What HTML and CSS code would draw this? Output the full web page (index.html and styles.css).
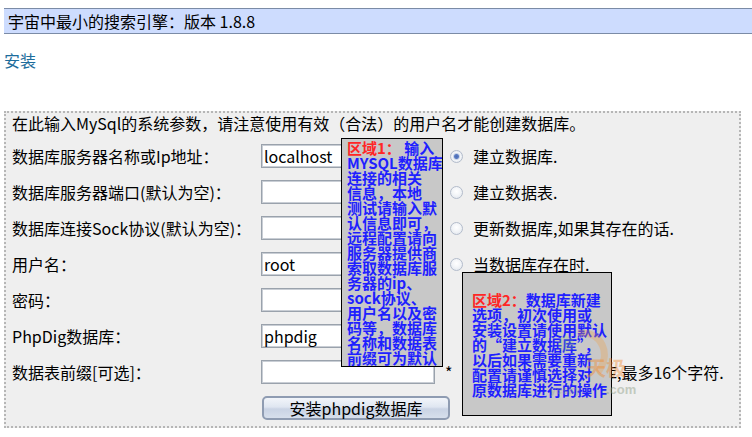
FILE: index.html
```html
<!DOCTYPE html>
<html lang="zh">
<head>
<meta charset="utf-8">
<title>PhpDig 安装</title>
<link rel="stylesheet" href="styles.css">
</head>
<body>
<div class="header">宇宙中最小的搜索引擎：版本 1.8.8</div>
<a class="install" href="#">安装</a>
<div class="box">
  <div class="intro">在此输入MySql的系统参数，请注意使用有效（合法）的用户名才能创建数据库。</div>
  <div class="grid">
    <div class="label">数据库服务器名称或Ip地址：</div>
    <div class="field"><input class="text" type="text" value="localhost"></div>
    <div class="opt"><input class="radio" type="radio" name="mode" checked><span>建立数据库.</span></div>

    <div class="label">数据库服务器端口(默认为空)：</div>
    <div class="field"><input class="text" type="text" value=""></div>
    <div class="opt"><input class="radio" type="radio" name="mode"><span>建立数据表.</span></div>

    <div class="label">数据库连接Sock协议(默认为空)：</div>
    <div class="field"><input class="text" type="text" value=""></div>
    <div class="opt"><input class="radio" type="radio" name="mode"><span>更新数据库,如果其存在的话.</span></div>

    <div class="label">用户名：</div>
    <div class="field"><input class="text" type="text" value="root"></div>
    <div class="opt"><input class="radio" type="radio" name="mode"><span>当数据库存在时.</span></div>

    <div class="label">密码：</div>
    <div class="field"><input class="text" type="password" value=""></div>
    <div class="opt"></div>

    <div class="label">PhpDig数据库：</div>
    <div class="field"><input class="text" type="text" value="phpdig"></div>
    <div class="opt"></div>

    <div class="label">数据表前缀[可选]：</div>
    <div class="field"><input class="text" type="text" value=""><span class="star">*</span></div>
    <div class="opt"><span class="note">当共享同一个数据库,最多16个字符.</span></div>

    <div class="label"></div>
    <div class="field btncell"><button class="btn" type="button">安装phpdig数据库</button></div>
    <div class="opt"></div>
  </div>

  <div class="tip tip1">
    <span class="red">区域1：</span> 输入<br>MYSQL数据库<br>连接的相关<br>信息，本地<br>测试请输入默<br>认信息即可，<br>远程配置请向<br>服务器提供商<br>索取数据库服<br>务器的ip、<br>sock协议、<br>用户名以及密<br>码等，数据库<br>名称和数据表<br>前缀可为默认
  </div>

  <div class="tip tip2">
    <span class="red">区域2：</span>数据库新建<br>选项，初次使用或<br>安装设置请使用默认<br>的“建立数据库”，<br>以后如果需要重新<br>配置请谨慎选择对<br>原数据库进行的操作
  </div>

  <svg class="wm" width="110" height="75" viewBox="0 0 110 75">
    <circle cx="26" cy="14" r="8" fill="#99cc66" opacity="0.22"/>
    <path d="M38 3 C62 1 72 24 58 42" stroke="#f2a040" stroke-width="7" fill="none" opacity="0.3"/>
    <text x="46" y="46" font-size="20" font-weight="700" fill="#f08a30" opacity="0.42" font-family="Noto Sans CJK SC, sans-serif">天极</text>
    <text x="10" y="64" font-size="11" font-weight="700" fill="#9aa090" opacity="0.35" font-family="Liberation Sans, sans-serif">yesky</text>
    <text x="66" y="64" font-size="13" font-weight="700" fill="#8c9c84" opacity="0.45" font-family="Liberation Sans, sans-serif">.com</text>
  </svg>
</div>
</body>
</html>
```

FILE: styles.css
```css
html, body {
  background: #ffffff;
}
body {
  margin: 8px 0 0 4px;
  font-family: "Noto Sans CJK SC", "Noto Sans", sans-serif;
  font-size: 16px;
  color: #000;
}
.header {
  height: 24px;
  line-height: 24px;
  background: #cddcfe;
  border-top: 1px solid #7b8ba6;
  border-bottom: 1px solid #7b8ba6;
  padding-left: 4px;
  white-space: nowrap;
}
.install {
  display: block;
  width: max-content;
  margin-top: 16px;
  line-height: 20px;
  color: #1d6d9c;
  text-decoration: none;
}
.box {
  position: relative;
  box-sizing: border-box;
  width: 737px;
  height: 317px;
  margin-top: 41px;
  border: 2px dotted #b6b6b6;
  background: #efefef;
  padding-left: 6px;
}
.intro {
  height: 25px;
  line-height: 20px;
  white-space: nowrap;
}
.grid {
  display: grid;
  grid-template-columns: 249px 187px 1fr;
  grid-auto-rows: 36px;
  align-items: center;
}
.label, .opt, .field {
  white-space: nowrap;
  line-height: 20px;
}
.field {
  display: flex;
  align-items: center;
}
.text {
  box-sizing: border-box;
  width: 174px;
  height: 24px;
  margin: 0;
  padding: 0 2px;
  border: 1px solid #9aa2ac;
  box-shadow: inset 0 0 0 1px #c9ced5;
  background: #fff;
  font-family: "Noto Sans CJK SC", "Noto Sans", sans-serif;
  font-size: 16px;
  color: #000;
  outline: none;
}
.star {
  margin-left: 10px;
}
.opt {
  display: flex;
  align-items: center;
}
.radio {
  appearance: none;
  -webkit-appearance: none;
  box-sizing: border-box;
  width: 13px;
  height: 13px;
  margin: 0 10px 0 2px;
  border: 1px solid #b3bccb;
  border-radius: 50%;
  background: radial-gradient(circle at 50% 40%, #ffffff 0, #f3f5f8 45%, #dde3eb 100%);
}
.radio:checked {
  background: radial-gradient(circle, #4a6cb5 0, #5b7cc2 2px, #c9d4e6 3px, #f3f5f8 4px, #dde3eb 100%);
}
.note {
  margin-left: 25px;
}
.btncell {
  grid-column: 2 / 4;
}
.btn {
  box-sizing: border-box;
  width: 188px;
  height: 24px;
  margin: 0 0 0 1px;
  padding: 0;
  border: 2px solid #8f9cb2;
  border-radius: 5px;
  background: linear-gradient(#f2f5fa 0%, #dfe6f1 45%, #c9d3e4 55%, #d7dfec 100%);
  font-family: "Noto Sans CJK SC", "Noto Sans", sans-serif;
  font-size: 16px;
  line-height: 20px;
  color: #000;
}
.tip {
  position: absolute;
  box-sizing: border-box;
  border: 1px solid #000;
  background: #c8c8c8;
  color: #1f1fff;
  font-weight: 700;
  font-size: 15px;
  line-height: 15px;
  white-space: nowrap;
  overflow: hidden;
}
.tip1 {
  left: 335px;
  top: 25px;
  width: 102px;
  height: 229px;
  padding: 1px 0 0 5px;
}
.tip2 {
  left: 456px;
  top: 159px;
  width: 150px;
  height: 144px;
  padding: 19px 0 0 9px;
}
.red {
  color: #ff2626;
}
.wm {
  position: absolute;
  left: 534px;
  top: 217px;
  pointer-events: none;
}
```
